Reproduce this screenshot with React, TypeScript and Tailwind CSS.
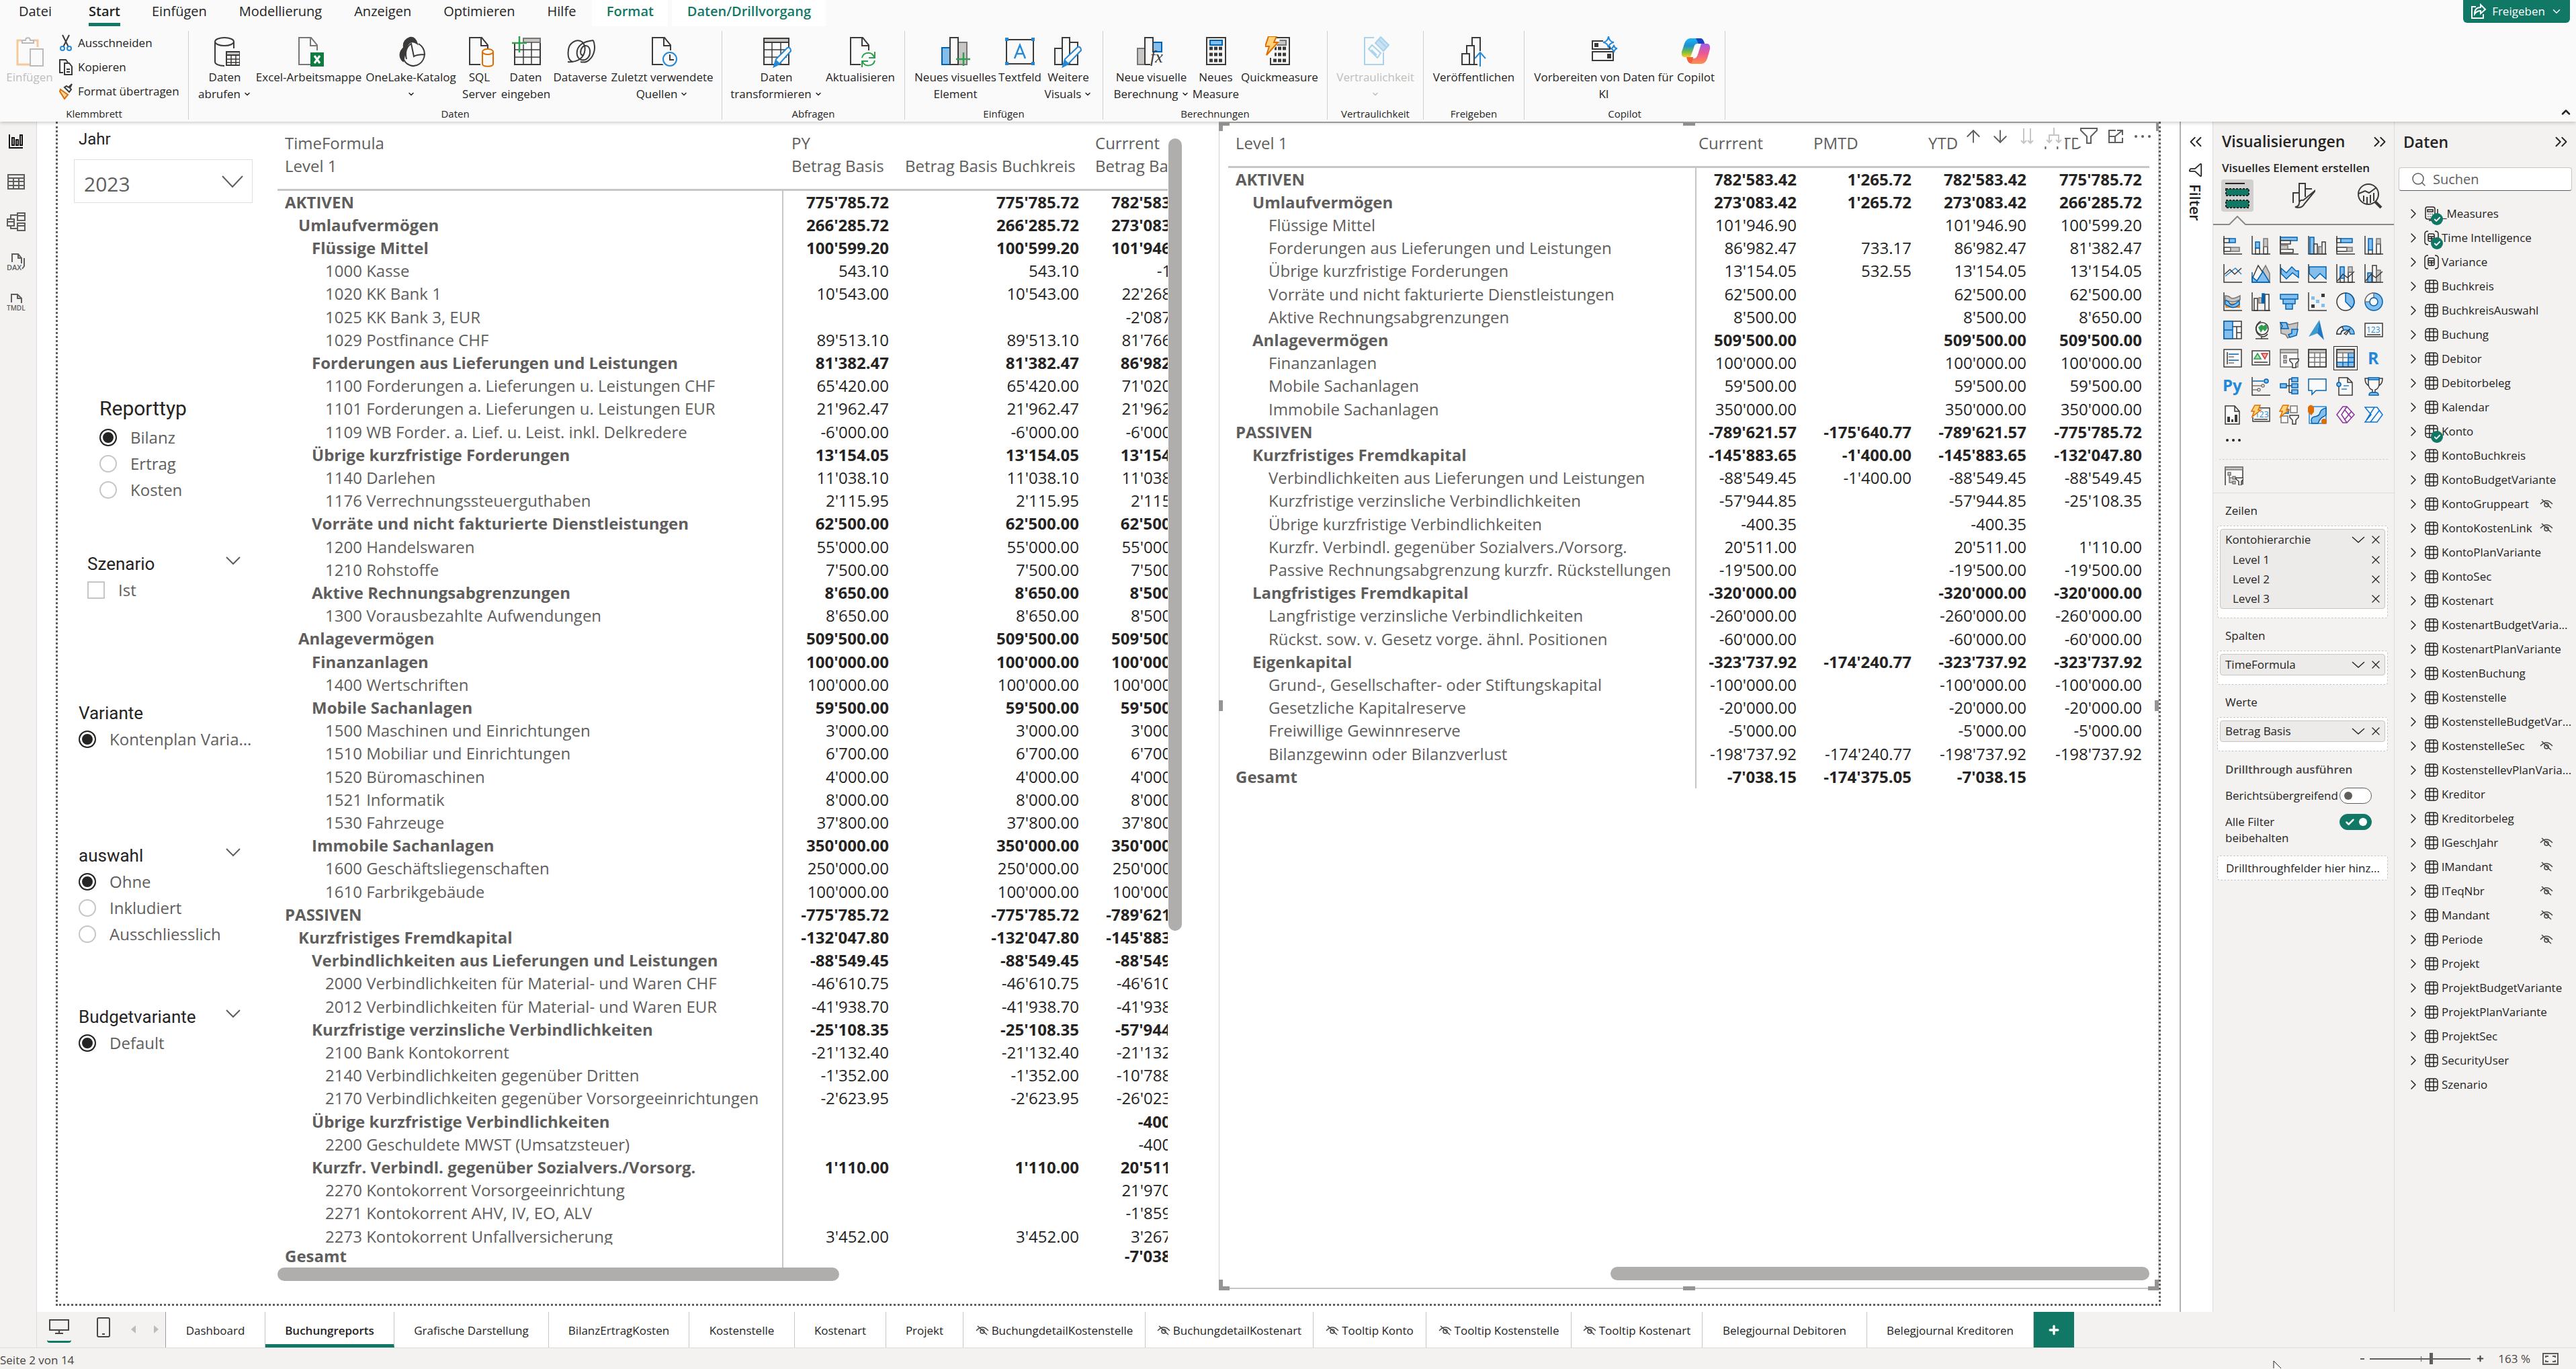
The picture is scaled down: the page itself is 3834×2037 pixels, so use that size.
import type { ReactNode } from "react";
import {
    ArrowDown,
    ArrowUp,
    Check,
    ChevronDown,
    ChevronRight,
    ChevronUp,
    ChevronsLeft,
    ChevronsRight,
    Filter,
    Plus,
    Search,
    X,
} from "lucide-react";

const DARK = "#3b3a39";
const BLUE = "#83beec";
const BLUE_LINE = "#0063b1";
const SKY = "#2488d8";
const GREY = "#c8c6c4";
const GREY_LINE = "#797775";
const PAPER = "#fafafa";
const ORANGE = "#e06c00";
const GREEN = "#2f9e4f";

/* ---------- ribbon icons ---------- */

function RibbonSvg({ children }: { children: ReactNode }) {
    return (
        <svg
            className="h-12 w-11 flex-none"
            viewBox="0 0 44 48"
            fill="none"
            stroke={DARK}
            strokeWidth="2"
        >
            {children}
        </svg>
    );
}

const Sheet = () => <path d="M28 42H7V2h18l9 11v8M24 2v12h10" fill="none" />;

const ribbonIcons: Record<string, ReactNode> = {
    paste: (
        <>
            <path d="M10 6H4v36h18" stroke="#f3c99c" strokeWidth="3" />
            <path d="M28 6h6v10" stroke="#f3c99c" strokeWidth="3" />
            <path d="M11 10V6h5c0-5 7-5 7 0h5v4z" stroke="#bdbbb8" fill={PAPER} />
            <path d="M23 19h19v25H23z" stroke="#bdbbb8" fill={PAPER} />
        </>
    ),
    database: (
        <>
            <ellipse cx="21" cy="8" rx="14" ry="6" />
            <path d="M7 8v30c0 3 5 6 14 6M35 8v10" />
            <path d="M24 23h20v20H24z" fill={PAPER} />
            <path d="M24 23h20v5H24z" fill={GREY} />
            <path d="M24 34h20M24 39h20M31 28v15M38 28v15" strokeWidth="1.5" />
        </>
    ),
    excel: (
        <>
            <g stroke={GREY_LINE}>
                <Sheet />
            </g>
            <path d="M24 24h20v21H24z" fill="#107c41" stroke="none" />
            <path d="m30 29 8 11m0-11-8 11" stroke="#fff" strokeWidth="3" />
        </>
    ),
    onelake: (
        <>
            <path d="M20 2c-8 3-10 9-9 15-6 5-8 14-1 20 3-9 2-19 8-26 4-4 9-3 13 0-2-6-6-10-11-9z" fill={DARK} />
            <path d="M15 34c-3-12 1-19 7-23l4 19c3-2 7-3 16-3-1 12-12 20-22 16-6-2-9-7-10-12M33 11c6 4 9 9 9 16" />
        </>
    ),
    sql: (
        <>
            <Sheet />
            <path d="M23 18h21v27H23z" fill={PAPER} stroke="none" />
            <g stroke={ORANGE}>
                <ellipse cx="34" cy="23" rx="8" ry="4" />
                <path d="M26 23v18c0 5 16 5 16 0V23" />
            </g>
        </>
    ),
    enter: (
        <>
            <path d="M5 10v32h38V3H18" />
            <path d="M18 3h25v6H18z" fill={GREY} stroke={GREY_LINE} />
            <path d="M5 20h38M5 31h38M18 12v30M30 9v33" strokeWidth="1.5" />
            <path d="M12 0v24M1 10h22" stroke={GREEN} strokeWidth="2.5" />
        </>
    ),
    dataverse: (
        <g strokeWidth="2">
            <path d="M41 6c-8 1-13 2-18 6-9 7-8 20 0 23 8 2 14-5 13-14-1-7-7-9-11-5-4 5-4 13 1 12" />
            <path d="M3 38c8 1 13-1 18-4 9-7 10-20 3-26C16 3 5 10 4 20c-1 7-1 16 7 18" />
            <path d="M41 6c4 10 2 22-6 29-4 4-9 4-13 3" />
        </g>
    ),
    recent: (
        <>
            <Sheet />
            <circle cx="33" cy="34" r="13" fill={PAPER} stroke="none" />
            <circle cx="33" cy="34" r="10" fill={PAPER} stroke={SKY} />
            <path d="M33 27v8h6" />
        </>
    ),
    transform: (
        <>
            <path d="M3 3h37v39H3z" />
            <path d="M3 3h37v6H3z" fill={GREY} />
            <path d="M3 20h37M3 31h34M15 9v33M28 9v33" strokeWidth="1.5" />
            <path d="m18 45 3-11 17-17q5-1 5 5L26 41z" fill={PAPER} stroke={SKY} />
            <path d="m18 45 3-9 5 5z" fill={SKY} stroke={SKY} />
        </>
    ),
    refresh: (
        <>
            <Sheet />
            <path d="M22 22h23v24H22z" fill={PAPER} stroke="none" />
            <path d="M24 32c2-9 15-10 18-1m1-8v9h-9M43 36c-2 9-15 10-18 2m-1 8v-9h9" stroke={GREEN} />
        </>
    ),
    newVisual: (
        <>
            <path d="M2 17h12v25H2z" fill={BLUE} stroke={BLUE_LINE} />
            <path d="M26 9h13v33H26z" fill={GREY} stroke={GREY_LINE} />
            <path d="M14 2h12v40H14z" fill={PAPER} />
            <path d="M34 24v20M23 34h22" stroke={GREEN} strokeWidth="2.5" />
        </>
    ),
    textbox: (
        <>
            <path d="M2 5h40v36H2z" />
            <path d="M0 2h5v5H0zM39 2h5v5h-5zM0 38h5v5H0zM39 38h5v5h-5z" fill={SKY} stroke="none" />
            <path d="m14 33 8-20 8 20M17 26h10" stroke={SKY} strokeWidth="2.5" />
        </>
    ),
    moreVisuals: (
        <>
            <path d="M2 18h11v24H2zM13 2h11v40H13zM24 9h12v33H24z" fill={PAPER} />
            <path d="m14 45 3-11 19-18q5-1 5 5L22 41z" fill={PAPER} stroke={SKY} />
            <path d="m14 45 3-9 5 5z" fill={SKY} stroke={SKY} />
        </>
    ),
    calcVisual: (
        <>
            <path d="M1 18h11v24H1z" fill={GREY} stroke={GREY_LINE} />
            <path d="M24 9h13v14H24z" fill={BLUE} stroke={BLUE_LINE} />
            <path d="M12 42V2h12v22M12 42h8" />
            <text x="20" y="39" fill={DARK} stroke="none" fontSize="26" fontStyle="italic" fontFamily="Liberation Serif, serif">
                fx
            </text>
        </>
    ),
    calculator: (
        <>
            <path d="M8 2h28v40H8z" />
            <path d="M13 6h18v7H13z" fill={BLUE} stroke={BLUE_LINE} />
            <path d="M12 18h20M12 27h20M12 36h20" strokeWidth="5" strokeDasharray="5 2" />
        </>
    ),
    quick: (
        <>
            <path d="M8 2h28v40H8z" />
            <path d="M13 6h18v7H13z" fill={GREY} stroke={GREY_LINE} />
            <path d="M12 18h20M12 27h20M12 36h20" strokeWidth="5" strokeDasharray="5 2" />
            <path d="M8-2H0v34h14V18l8-12z" fill={PAPER} stroke="none" />
            <path d="M5 0h12l-4 9h6L2 28l4-13H0z" fill="#ffd37a" stroke={ORANGE} />
        </>
    ),
    sensitivity: (
        <g stroke="#a9d3ec">
            <path d="M20 2H6v40h28V24" />
            <path d="m22 10 8-9 12 12-8 9zM27 5l12 12" fill="#c9e3f3" />
            <path d="m12 19 5-6 13 12-5 7zM16 20l8 8" />
        </g>
    ),
    publish: (
        <>
            <path d="M4 26h11v16H4zM11 26V14h11v28M19 14V2h12v20M4 42h23" />
            <path d="M31 45V24m-8 9 8-9 8 9" stroke={SKY} />
        </>
    ),
    prepare: (
        <>
            <path d="M21 7H5v12h26v-4M5 23h31v13H5z" />
            <path d="M9 11h4v4H9zM28 27h4v5h-4z" fill={DARK} />
            <path d="M29 0q1 8 8 9-7 1-8 8-1-7-8-8 7-1 8-9zM37 13q1 5 5 5-4 1-5 6-1-5-5-6 4 0 5-5z" fill={PAPER} stroke={SKY} />
        </>
    ),
    copilot: (
        <g stroke="none">
            <defs>
                <linearGradient id="cp-left" x1="0" y1="0" x2="0" y2="1">
                    <stop offset="0" stopColor="#19b6f6" />
                    <stop offset=".4" stopColor="#1f8fd0" />
                    <stop offset=".7" stopColor="#6dbb4a" />
                    <stop offset="1" stopColor="#ffcb1f" />
                </linearGradient>
                <linearGradient id="cp-right" x1="0" y1="0" x2="0" y2="1">
                    <stop offset="0" stopColor="#a35ae6" />
                    <stop offset=".5" stopColor="#ee5a8f" />
                    <stop offset="1" stopColor="#ff8f4a" />
                </linearGradient>
            </defs>
            <path d="M14 3h14q5 0 7 8H24q-4 0-5 6l-5 14H5q-5 0-4-8l4-12q3-8 9-8z" fill="url(#cp-left)" />
            <path d="M22 3h7q4 0 6 8H26z" fill="#1643c6" />
            <path d="M30 41H16q-5 0-7-8h10q4 0 6-6l5-16h8q6 0 5 8l-4 14q-3 8-9 8z" fill="url(#cp-right)" />
            <path d="M8 31h10q-1 9-4 9-4 0-6-9z" fill="#f0603a" />
        </g>
    ),
};

type RibbonItem = { icon: string; lines: string[]; width: string; menu?: boolean; off?: boolean };

const ribbonGroups: { name: string; width: string; items: RibbonItem[] }[] = [
    {
        name: "Daten",
        width: "w-[794px]",
        items: [
            { icon: "database", lines: ["Daten", "abrufen"], width: "w-[80px]", menu: true },
            { icon: "excel", lines: ["Excel-Arbeitsmappe"], width: "w-[170px]" },
            { icon: "onelake", lines: ["OneLake-Katalog", ""], width: "w-[134px]", menu: true },
            { icon: "sql", lines: ["SQL", "Server"], width: "w-[70px]" },
            { icon: "enter", lines: ["Daten", "eingeben"], width: "w-[68px]" },
            { icon: "dataverse", lines: ["Dataverse"], width: "w-[94px]" },
            { icon: "recent", lines: ["Zuletzt verwendete", "Quellen"], width: "w-[150px]", menu: true },
        ],
    },
    {
        name: "Abfragen",
        width: "w-[272px]",
        items: [
            { icon: "transform", lines: ["Daten", "transformieren"], width: "w-[140px]", menu: true },
            { icon: "refresh", lines: ["Aktualisieren"], width: "w-[110px]" },
        ],
    },
    {
        name: "Einfügen",
        width: "w-[295px]",
        items: [
            { icon: "newVisual", lines: ["Neues visuelles", "Element"], width: "w-[126px]" },
            { icon: "textbox", lines: ["Textfeld"], width: "w-[66px]" },
            { icon: "moreVisuals", lines: ["Weitere", "Visuals"], width: "w-[78px]", menu: true },
        ],
    },
    {
        name: "Berechnungen",
        width: "w-[334px]",
        items: [
            { icon: "calcVisual", lines: ["Neue visuelle", "Berechnung"], width: "w-[116px]", menu: true },
            { icon: "calculator", lines: ["Neues", "Measure"], width: "w-[76px]" },
            { icon: "quick", lines: ["Quickmeasure"], width: "w-[114px]" },
        ],
    },
    {
        name: "Vertraulichkeit",
        width: "w-[143px]",
        items: [{ icon: "sensitivity", lines: ["Vertraulichkeit", ""], width: "w-[120px]", menu: true, off: true }],
    },
    {
        name: "Freigeben",
        width: "w-[150px]",
        items: [{ icon: "publish", lines: ["Veröffentlichen"], width: "w-[126px]" }],
    },
    {
        name: "Copilot",
        width: "w-[299px]",
        items: [
            { icon: "prepare", lines: ["Vorbereiten von Daten für", "KI"], width: "w-[212px]" },
            { icon: "copilot", lines: ["Copilot"], width: "w-[62px]" },
        ],
    },
];

function RibbonButton({ item }: { item: RibbonItem }) {
    return (
        <button
            disabled={item.off}
            className={`flex flex-none flex-col items-center ${item.width} ${item.off ? "text-[#c0bebc]" : ""}`}
        >
            <RibbonSvg>{ribbonIcons[item.icon]}</RibbonSvg>
            {item.lines.map((line, i) => (
                <span key={i} className="flex h-[25px] items-center gap-1 whitespace-nowrap">
                    {line}
                    {item.menu && i === item.lines.length - 1 && <ChevronDown size={12} strokeWidth={3} />}
                </span>
            ))}
        </button>
    );
}

function Ribbon() {
    const tabs = ["Einfügen", "Modellierung", "Anzeigen", "Optimieren", "Hilfe"];

    return (
        <header className="relative z-10 flex-none bg-[#fafafa] shadow-[0_1px_6px_rgba(0,0,0,0.25)]">
            <div className="flex h-[39px] items-stretch justify-between">
                <nav className="flex pl-1 text-[20px] leading-[34px]">
                    <button className="w-[97px] pb-[5px]">Datei</button>
                    <button className="w-[101px] pl-2 font-semibold">
                        <span className="inline-block h-[39px] border-b-5 border-[#117865]">Start</span>
                    </button>
                    {tabs.map((tab) => (
                        <button key={tab} className="px-[24px] pb-[5px]">
                            {tab}
                        </button>
                    ))}
                    <button className="w-[113px] bg-white pb-[5px] font-semibold text-[#117865]">Format</button>
                    <button className="ml-[6px] w-[229px] bg-white pb-[5px] font-semibold text-[#117865]">
                        Daten/Drillvorgang
                    </button>
                </nav>
                <button className="mr-[9px] flex h-[34px] w-[159px] items-center justify-center gap-2 rounded-b-md bg-[#117865] text-[17px] text-white">
                    <svg width="24" height="24" viewBox="0 0 24 24" fill="none" stroke="currentColor" strokeWidth="2">
                        <path d="M8 5H2v17h17v-6M15 2l7 7-7 6v-4c-5 0-7 2-9 5 0-6 3-10 9-10z" />
                    </svg>
                    Freigeben
                    <ChevronDown size={18} />
                </button>
            </div>

            <div className="flex h-[142px] pt-[7px] text-[17px]">
                <section className="flex h-[132px] w-[281px] flex-none flex-col border-r border-[#d2d0ce]">
                    <div className="flex flex-1">
                        <button disabled className="flex w-[88px] flex-col items-center pt-2 text-[#c0bebc]">
                            <RibbonSvg>{ribbonIcons.paste}</RibbonSvg>
                            <span className="h-[25px]">Einfügen</span>
                        </button>
                        <div className="flex flex-col">
                            <button className="flex h-9 items-center gap-2">
                                <svg width="20" height="26" viewBox="0 0 20 26" fill="none" stroke={DARK} strokeWidth="2">
                                    <path d="m5 1 9 18M15 1 6 19" />
                                    <circle cx="5" cy="21" r="3" stroke={SKY} />
                                    <circle cx="15" cy="21" r="3" stroke={SKY} />
                                </svg>
                                Ausschneiden
                            </button>
                            <button className="flex h-9 items-center gap-2">
                                <svg width="20" height="26" viewBox="0 0 20 26" fill="none" stroke={DARK} strokeWidth="2">
                                    <path d="M6 21H1V2h9l3 4M8 7h7l4 5v12H8zM11 16h5M11 20h5" />
                                </svg>
                                Kopieren
                            </button>
                            <button className="flex h-9 items-center gap-2 whitespace-nowrap">
                                <svg width="20" height="26" viewBox="0 0 20 26" fill="none" strokeWidth="2">
                                    <path d="m2 10 11 8-5 6L1 13z" fill="#fbd9a9" stroke={ORANGE} />
                                    <path d="m8 7 7 7 3-4-2-2 3-6-5 5-3-2z" fill={PAPER} stroke={DARK} />
                                </svg>
                                Format übertragen
                            </button>
                        </div>
                    </div>
                    <h2 className="text-center text-[15px] leading-[18px]">Klemmbrett</h2>
                </section>

                {ribbonGroups.map((group) => (
                    <section
                        key={group.name}
                        className={`flex h-[132px] flex-none flex-col border-r border-[#d2d0ce] ${group.width}`}
                    >
                        <div className="flex flex-1 justify-center pt-2">
                            {group.items.map((item) => (
                                <RibbonButton key={item.lines[0] + item.icon} item={item} />
                            ))}
                        </div>
                        <h2 className="text-center text-[15px] leading-[18px]">{group.name}</h2>
                    </section>
                ))}

                <button aria-label="Menüband minimieren" className="mt-auto mr-[5px] mb-1 ml-auto">
                    <ChevronUp size={20} strokeWidth={3} />
                </button>
            </div>
        </header>
    );
}

/* ---------- left rail ---------- */

function SideRail() {
    const frame = "h-7 w-7";

    return (
        <nav className="flex w-[55px] flex-none flex-col items-center gap-[32px] border-r border-[#dedcda] bg-[#f3f2f1] pt-[15px] pr-[6px]">
            <button aria-label="Berichtsansicht">
                <svg className={frame} viewBox="0 0 28 28" fill="none" stroke="#111" strokeWidth="2">
                    <path d="M4 4v20h20M8 9h3v11H8zM14 12h3v8h-3zM20 5h3v15h-3z" />
                </svg>
            </button>
            <button aria-label="Tabellenansicht">
                <svg className={frame} viewBox="0 0 28 28" fill="none" stroke="#605e5c" strokeWidth="2">
                    <path d="M2 4h24v21H2zM2 9h24M2 14h24M2 20h24M10 9v16M18 9v16" />
                </svg>
            </button>
            <button aria-label="Modellansicht">
                <svg className={frame} viewBox="0 0 28 28" fill="none" stroke="#605e5c" strokeWidth="2">
                    <path d="M16 1h11v11H16zM16 16h11v11H16zM1 10h10v10H1zM16 5h11M16 20h11M1 14h10M6 10V4h10M6 20v4h10" />
                </svg>
            </button>
            <button aria-label="DAX-Abfrageansicht">
                <svg className={frame} viewBox="0 0 28 28" fill="none" stroke="#605e5c" strokeWidth="2">
                    <path d="M8 14V2h9l5 6v8M17 2v6h5M26 8v12l-3 4" />
                    <text x="0" y="26" fontSize="11" fontWeight="600" fill="#605e5c" stroke="none">
                        DAX
                    </text>
                </svg>
            </button>
            <button aria-label="TMDL-Ansicht">
                <svg className={frame} viewBox="0 0 28 28" fill="none" stroke="#605e5c" strokeWidth="2">
                    <path d="M7 14V2h9l6 6v7M16 2v6h6" />
                    <text x="0" y="26" fontSize="10" fontWeight="600" fill="#605e5c" stroke="none">
                        TMDL
                    </text>
                </svg>
            </button>
        </nav>
    );
}

/* ---------- slicers ---------- */

const choiceBox =
    "h-[26px] w-[26px] flex-none appearance-none border-2 border-[#c8c6c4] bg-white checked:border-[#252423] checked:bg-[#252423] checked:shadow-[inset_0_0_0_3px_white]";

type SlicerProps = {
    title: string;
    options: string[];
    spacing: string;
    indent?: string;
    type?: "radio" | "checkbox";
    menu?: boolean;
    selected?: boolean;
    big?: boolean;
};

function Slicer({ title, options, spacing, indent = "pl-[31px]", type = "radio", menu, selected = true, big }: SlicerProps) {
    return (
        <fieldset className={`${spacing} ${indent}`}>
            <legend
                className={`font-['Roboto',sans-serif] text-[#252423] ${
                    big ? "text-[30px] leading-[36px]" : "text-[26px] leading-[28px]"
                }`}
            >
                {title}
            </legend>
            {menu && (
                <button aria-label={`${title} Optionen`} className="absolute left-[248px] -mt-[32px]">
                    <svg width="26" height="26" viewBox="0 0 26 26" fill="none" stroke="currentColor" strokeWidth="2">
                        <path d="m3 8 10 10L23 8" />
                    </svg>
                </button>
            )}
            <div className="mt-[5px] text-[24px] leading-[39px]">
                {options.map((option, i) => (
                    <label key={option} className="flex h-[39px] items-center gap-5 whitespace-nowrap">
                        <input
                            type={type}
                            name={title}
                            defaultChecked={selected && i === 0}
                            className={`${choiceBox} ${type === "radio" ? "rounded-full" : ""}`}
                        />
                        {option}
                    </label>
                ))}
            </div>
        </fieldset>
    );
}

function Slicers() {
    return (
        <div className="relative w-[327px] flex-none pt-[12px] text-[#605e5c]">
            <label
                htmlFor="jahr"
                className="block pl-[31px] font-['Roboto',sans-serif] text-[24px] leading-[28px] text-[#252423]"
            >
                Jahr
            </label>
            <div className="relative mt-4 ml-6 w-[266px]">
                <select
                    id="jahr"
                    className="h-[65px] w-full appearance-none border border-[#e1dfdd] bg-white pt-2 pl-[14px] text-[30px]"
                >
                    <option>2023</option>
                </select>
                <svg className="pointer-events-none absolute top-[24px] right-[14px]" width="32" height="20" viewBox="0 0 32 20" fill="none" stroke="#605e5c" strokeWidth="2">
                    <path d="m1 1 15 16L31 1" />
                </svg>
            </div>
            <Slicer title="Reporttyp" options={["Bilanz", "Ertrag", "Kosten"]} spacing="mt-[288px]" indent="pl-[62px]" big />
            <Slicer title="Szenario" options={["Ist"]} spacing="mt-[77px]" indent="pl-[44px]" type="checkbox" selected={false} menu />
            <Slicer title="Variante" options={["Kontenplan Varia..."]} spacing="mt-[150px]" />
            <Slicer title="auswahl" options={["Ohne", "Inkludiert", "Ausschliesslich"]} spacing="mt-[140px]" menu />
            <Slicer title="Budgetvariante" options={["Default"]} spacing="mt-[90px]" menu />
        </div>
    );
}

/* ---------- matrices ---------- */

// level, label, then one value for each column
type Row = [number, string, ...string[]];

const accountRows: Row[] = [
    [0, "AKTIVEN", "775'785.72", "782'583.42"],
    [1, "Umlaufvermögen", "266'285.72", "273'083.42"],
    [2, "Flüssige Mittel", "100'599.20", "101'946.90"],
    [3, "1000 Kasse", "543.10", "-1.10"],
    [3, "1020 KK Bank 1", "10'543.00", "22'268.10"],
    [3, "1025 KK Bank 3, EUR", "", "-2'087.00"],
    [3, "1029 Postfinance CHF", "89'513.10", "81'766.90"],
    [2, "Forderungen aus Lieferungen und Leistungen", "81'382.47", "86'982.47"],
    [3, "1100 Forderungen a. Lieferungen u. Leistungen CHF", "65'420.00", "71'020.00"],
    [3, "1101 Forderungen a. Lieferungen u. Leistungen EUR", "21'962.47", "21'962.47"],
    [3, "1109 WB Forder. a. Lief. u. Leist. inkl. Delkredere", "-6'000.00", "-6'000.00"],
    [2, "Übrige kurzfristige Forderungen", "13'154.05", "13'154.05"],
    [3, "1140 Darlehen", "11'038.10", "11'038.10"],
    [3, "1176 Verrechnungssteuerguthaben", "2'115.95", "2'115.95"],
    [2, "Vorräte und nicht fakturierte Dienstleistungen", "62'500.00", "62'500.00"],
    [3, "1200 Handelswaren", "55'000.00", "55'000.00"],
    [3, "1210 Rohstoffe", "7'500.00", "7'500.00"],
    [2, "Aktive Rechnungsabgrenzungen", "8'650.00", "8'500.00"],
    [3, "1300 Vorausbezahlte Aufwendungen", "8'650.00", "8'500.00"],
    [1, "Anlagevermögen", "509'500.00", "509'500.00"],
    [2, "Finanzanlagen", "100'000.00", "100'000.00"],
    [3, "1400 Wertschriften", "100'000.00", "100'000.00"],
    [2, "Mobile Sachanlagen", "59'500.00", "59'500.00"],
    [3, "1500 Maschinen und Einrichtungen", "3'000.00", "3'000.00"],
    [3, "1510 Mobiliar und Einrichtungen", "6'700.00", "6'700.00"],
    [3, "1520 Büromaschinen", "4'000.00", "4'000.00"],
    [3, "1521 Informatik", "8'000.00", "8'000.00"],
    [3, "1530 Fahrzeuge", "37'800.00", "37'800.00"],
    [2, "Immobile Sachanlagen", "350'000.00", "350'000.00"],
    [3, "1600 Geschäftsliegenschaften", "250'000.00", "250'000.00"],
    [3, "1610 Farbrikgebäude", "100'000.00", "100'000.00"],
    [0, "PASSIVEN", "-775'785.72", "-789'621.57"],
    [1, "Kurzfristiges Fremdkapital", "-132'047.80", "-145'883.65"],
    [2, "Verbindlichkeiten aus Lieferungen und Leistungen", "-88'549.45", "-88'549.45"],
    [3, "2000 Verbindlichkeiten für Material- und Waren CHF", "-46'610.75", "-46'610.75"],
    [3, "2012 Verbindlichkeiten für Material- und Waren EUR", "-41'938.70", "-41'938.70"],
    [2, "Kurzfristige verzinsliche Verbindlichkeiten", "-25'108.35", "-57'944.85"],
    [3, "2100 Bank Kontokorrent", "-21'132.40", "-21'132.40"],
    [3, "2140 Verbindlichkeiten gegenüber Dritten", "-1'352.00", "-10'788.50"],
    [3, "2170 Verbindlichkeiten gegenüber Vorsorgeeinrichtungen", "-2'623.95", "-26'023.95"],
    [2, "Übrige kurzfristige Verbindlichkeiten", "", "-400.35"],
    [3, "2200 Geschuldete MWST (Umsatzsteuer)", "", "-400.35"],
    [2, "Kurzfr. Verbindl. gegenüber Sozialvers./Vorsorg.", "1'110.00", "20'511.00"],
    [3, "2270 Kontokorrent Vorsorgeeinrichtung", "", "21'970.00"],
    [3, "2271 Kontokorrent AHV, IV, EO, ALV", "", "-1'859.00"],
    [3, "2273 Kontokorrent Unfallversicherung", "3'452.00", "3'267.00"],
];

const levelRows: Row[] = [
    [0, "AKTIVEN", "782'583.42", "1'265.72", "782'583.42", "775'785.72"],
    [1, "Umlaufvermögen", "273'083.42", "1'265.72", "273'083.42", "266'285.72"],
    [2, "Flüssige Mittel", "101'946.90", "", "101'946.90", "100'599.20"],
    [2, "Forderungen aus Lieferungen und Leistungen", "86'982.47", "733.17", "86'982.47", "81'382.47"],
    [2, "Übrige kurzfristige Forderungen", "13'154.05", "532.55", "13'154.05", "13'154.05"],
    [2, "Vorräte und nicht fakturierte Dienstleistungen", "62'500.00", "", "62'500.00", "62'500.00"],
    [2, "Aktive Rechnungsabgrenzungen", "8'500.00", "", "8'500.00", "8'650.00"],
    [1, "Anlagevermögen", "509'500.00", "", "509'500.00", "509'500.00"],
    [2, "Finanzanlagen", "100'000.00", "", "100'000.00", "100'000.00"],
    [2, "Mobile Sachanlagen", "59'500.00", "", "59'500.00", "59'500.00"],
    [2, "Immobile Sachanlagen", "350'000.00", "", "350'000.00", "350'000.00"],
    [0, "PASSIVEN", "-789'621.57", "-175'640.77", "-789'621.57", "-775'785.72"],
    [1, "Kurzfristiges Fremdkapital", "-145'883.65", "-1'400.00", "-145'883.65", "-132'047.80"],
    [2, "Verbindlichkeiten aus Lieferungen und Leistungen", "-88'549.45", "-1'400.00", "-88'549.45", "-88'549.45"],
    [2, "Kurzfristige verzinsliche Verbindlichkeiten", "-57'944.85", "", "-57'944.85", "-25'108.35"],
    [2, "Übrige kurzfristige Verbindlichkeiten", "-400.35", "", "-400.35", ""],
    [2, "Kurzfr. Verbindl. gegenüber Sozialvers./Vorsorg.", "20'511.00", "", "20'511.00", "1'110.00"],
    [2, "Passive Rechnungsabgrenzung kurzfr. Rückstellungen", "-19'500.00", "", "-19'500.00", "-19'500.00"],
    [1, "Langfristiges Fremdkapital", "-320'000.00", "", "-320'000.00", "-320'000.00"],
    [2, "Langfristige verzinsliche Verbindlichkeiten", "-260'000.00", "", "-260'000.00", "-260'000.00"],
    [2, "Rückst. sow. v. Gesetz vorge. ähnl. Positionen", "-60'000.00", "", "-60'000.00", "-60'000.00"],
    [1, "Eigenkapital", "-323'737.92", "-174'240.77", "-323'737.92", "-323'737.92"],
    [2, "Grund-, Gesellschafter- oder Stiftungskapital", "-100'000.00", "", "-100'000.00", "-100'000.00"],
    [2, "Gesetzliche Kapitalreserve", "-20'000.00", "", "-20'000.00", "-20'000.00"],
    [2, "Freiwillige Gewinnreserve", "-5'000.00", "", "-5'000.00", "-5'000.00"],
    [2, "Bilanzgewinn oder Bilanzverlust", "-198'737.92", "-174'240.77", "-198'737.92", "-198'737.92"],
    [0, "Gesamt", "-7'038.15", "-174'375.05", "-7'038.15", ""],
];

const accountIndent = ["pl-[11px]", "pl-[31px]", "pl-[51px]", "pl-[71px]"];
const levelIndent = ["pl-[11px]", "pl-[36px]", "pl-[60px]"];

function MatrixRow({ label, values, bold, indent }: { label: string; values: string[]; bold: boolean; indent: string }) {
    return (
        <tr className={`h-[34px] nth-[5n]:h-[35px] ${bold ? "font-bold" : ""}`}>
            <th
                scope="row"
                className={`border-r-2 border-[#c8c6c4] p-0 text-left text-[#605e5c] ${indent} ${bold ? "font-bold" : "font-normal"}`}
            >
                {label}
            </th>
            {values.map((value, i) => (
                <td key={i} className="p-0 pr-[11px] text-right text-[#252423]">
                    {value}
                </td>
            ))}
        </tr>
    );
}

function AccountColumns() {
    return (
        <colgroup>
            <col className="w-[752px]" />
            <col className="w-[169px]" />
            <col className="w-[283px]" />
            <col className="w-[171px]" />
        </colgroup>
    );
}

function AccountMatrix() {
    const tableClass = "w-[1375px] table-fixed border-collapse text-[24px] leading-[34px] whitespace-nowrap";

    return (
        <div className="flex w-[1351px] flex-none">
            <div className="flex w-[1325px] flex-col overflow-hidden pt-[15px] pb-[34px]">
                <div className="min-h-0 flex-1 overflow-hidden">
                    <table className={tableClass}>
                        <AccountColumns />
                        <thead className="text-left text-[#605e5c]">
                            <tr className="h-[34px]">
                                <th className="p-0 pl-[11px] font-normal">TimeFormula</th>
                                <th className="p-0 pl-[13px] font-normal" colSpan={2}>PY</th>
                                <th className="p-0 pl-[13px] font-normal">Currrent</th>
                            </tr>
                            <tr className="h-[52px] border-b-3 border-[#c8c6c4] align-top">
                                <th className="p-0 pl-[11px] font-normal">Level 1</th>
                                <th className="p-0 pl-[13px] font-normal">Betrag Basis</th>
                                <th className="p-0 pl-[13px] font-normal">Betrag Basis Buchkreis</th>
                                <th className="p-0 pl-[13px] font-normal">Betrag Basis</th>
                            </tr>
                        </thead>
                        <tbody>
                            {accountRows.map(([level, label, previous, current]) => (
                                <MatrixRow
                                    key={label}
                                    label={label}
                                    values={[previous, previous, current]}
                                    bold={level < 3}
                                    indent={accountIndent[level]}
                                />
                            ))}
                        </tbody>
                    </table>
                </div>
                <table className={`${tableClass} flex-none`}>
                    <AccountColumns />
                    <tbody>
                        <MatrixRow label="Gesamt" values={["", "", "-7'038.15"]} bold indent="pl-[11px]" />
                    </tbody>
                </table>
                <div className="h-5 w-[836px] flex-none rounded-full bg-[#b0aeac]" />
            </div>
            <div className="mt-[25px] ml-px h-[1179px] w-5 rounded-full bg-[#b0aeac]" />
        </div>
    );
}

const handle = "absolute bg-[#979593]";

function LevelMatrix() {
    return (
        <div className="relative mb-[22px] ml-[50px] flex min-w-0 flex-1 flex-col border border-t-2 border-b-2 border-[#d2d0ce] border-t-[#b3b0ad] border-b-[#c8c6c4] pt-[13px] pl-[13px]">
            <table className="w-[1371px] table-fixed border-collapse text-[24px] leading-[34px] whitespace-nowrap">
                <colgroup>
                    <col className="w-[696px]" />
                    <col className="w-[161px]" />
                    <col className="w-[171px]" />
                    <col className="w-[171px]" />
                    <col className="w-[172px]" />
                </colgroup>
                <thead className="text-left text-[#605e5c]">
                    <tr className="h-[52px] border-b-3 border-[#c8c6c4] align-top">
                        <th className="p-0 pl-[11px] font-normal">Level 1</th>
                        <th className="p-0 pl-[4px] font-normal">Currrent</th>
                        <th className="p-0 pl-[14px] font-normal">PMTD</th>
                        <th className="p-0 pl-[14px] font-normal">YTD</th>
                        <th className="p-0 pl-[14px] font-normal">PYTD</th>
                    </tr>
                </thead>
                <tbody>
                    {levelRows.map(([level, label, ...values]) => (
                        <MatrixRow
                            key={label}
                            label={label}
                            values={values}
                            bold={level < 2}
                            indent={levelIndent[level]}
                        />
                    ))}
                </tbody>
            </table>
            <div className="mt-auto mr-[13px] mb-[11px] ml-auto h-5 w-[802px] rounded-full bg-[#b0aeac]" />

            {/* visual header, floats over the column headers */}
            <div className="absolute top-[2px] right-[7px] flex gap-[8px] text-[#605e5c]">
                <button aria-label="Drillup" className="flex h-9 w-8 items-center justify-center">
                    <ArrowUp size={30} strokeWidth={1.5} />
                </button>
                <button aria-label="Drilldown" className="flex h-9 w-8 items-center justify-center">
                    <ArrowDown size={30} strokeWidth={1.5} />
                </button>
                <button aria-label="Nächste Ebene" className="flex h-9 w-8 items-center justify-center text-[#c8c6c4]">
                    <svg width="24" height="26" viewBox="0 0 24 26" fill="none" stroke="currentColor" strokeWidth="2">
                        <path d="M7 1v22m-4-4 4 4 4-4M17 1v22m-4-4 4 4 4-4" />
                    </svg>
                </button>
                <button aria-label="Alle erweitern" className="flex h-[33px] w-8 items-center justify-center bg-white text-[#c8c6c4]">
                    <svg width="24" height="26" viewBox="0 0 24 26" fill="none" stroke="currentColor" strokeWidth="2">
                        <path d="M12 1v10M5 23V12h14v11M1 19l4 4 4-4m6 0 4 4 4-4" />
                    </svg>
                </button>
                <button aria-label="Filter" className="ml-3 flex h-[33px] w-8 items-center justify-center bg-white">
                    <svg width="26" height="24" viewBox="0 0 26 24" fill="none" stroke="currentColor" strokeWidth="2">
                        <path d="M1 1h24v3l-9 9v10h-6V13L1 4z" />
                    </svg>
                </button>
                <button aria-label="Fokusmodus" className="flex h-9 w-8 items-center justify-center">
                    <svg width="24" height="22" viewBox="0 0 24 22" fill="none" stroke="currentColor" strokeWidth="2">
                        <path d="M12 2H2v18h20v-7M2 11h9v9M11 11 22 2m-8 0h8v7" />
                    </svg>
                </button>
                <button aria-label="Weitere Optionen" className="flex h-9 w-8 items-center justify-center">
                    <svg width="26" height="6" viewBox="0 0 26 6" fill="currentColor">
                        <circle cx="3" cy="3" r="2" />
                        <circle cx="13" cy="3" r="2" />
                        <circle cx="23" cy="3" r="2" />
                    </svg>
                </button>
            </div>

            <span className={`${handle} top-0 -left-px h-1 w-4`} />
            <span className={`${handle} top-0 -left-px h-3 w-1.5`} />
            <span className={`${handle} top-0 left-1/2 h-1 w-[18px] -translate-x-1/2`} />
            <span className={`${handle} top-0 -right-px h-3 w-1`} />
            <span className={`${handle} top-1/2 -left-px h-4 w-1.5 -translate-y-1/2`} />
            <span className={`${handle} top-1/2 -right-px h-4 w-1.5 -translate-y-1/2`} />
            <span className={`${handle} -bottom-1 left-1/2 h-1.5 w-[18px] -translate-x-1/2`} />
            <span className={`${handle} -bottom-1 -left-px h-1.5 w-4`} />
            <span className={`${handle} -bottom-1 -left-px h-4 w-1.5`} />
            <span className={`${handle} -right-px -bottom-1 h-1.5 w-4`} />
            <span className={`${handle} -right-px -bottom-1 h-4 w-1.5`} />
        </div>
    );
}

/* ---------- visualisation pane ---------- */

const Axis = () => <path d="M1 0v27h27" fill="none" />;
const blue = { fill: BLUE, stroke: BLUE_LINE };
const grey = { fill: GREY, stroke: GREY_LINE };
const Bolt = () => (
    <path d="M5 0h8l-3 7h4L1 17l3-8H0z" fill="#ffd37a" stroke={ORANGE} strokeWidth="1.5" />
);

const visuals: { name: string; art: ReactNode }[] = [
    { name: "Gestapeltes Balkendiagramm", art: <><path d="M1 4h8v6H1zM1 17h10v6H1z" /><path d="M9 4h9v6H9z" {...blue} /><path d="M11 17h13v6H11z" {...grey} /><Axis /></> },
    { name: "Gestapeltes Säulendiagramm", art: <><path d="M6 18h6v9H6zM18 16h6v11h-6z" /><path d="M6 9h6v9H6z" {...blue} /><path d="M18 4h6v12h-6z" {...grey} /><Axis /></> },
    { name: "Gruppiertes Balkendiagramm", art: <><path d="M1 2h25v5H1z" {...blue} /><path d="M1 7h15v5H1zM1 20h19v5H1z" /><path d="M1 14h11v6H1z" {...grey} /><Axis /></> },
    { name: "Gruppiertes Säulendiagramm", art: <><path d="M3 2h6v25H3z" {...blue} /><path d="M9 12h5v15H9zM21 9h5v18h-5z" /><path d="M16 16h5v11h-5z" {...grey} /><Axis /></> },
    { name: "100% gestapelte Balken", art: <><path d="M1 4h6v6H1zM1 17h15v6H1z" /><path d="M7 4h17v6H7z" {...blue} /><path d="M16 17h8v6h-8z" {...grey} /><Axis /></> },
    { name: "100% gestapelte Säulen", art: <><path d="M6 20h6v7H6zM18 12h6v15h-6z" /><path d="M6 4h6v17H6z" {...blue} /><path d="M18 4h6v8h-6z" {...grey} /><Axis /></> },
    { name: "Liniendiagramm", art: <><path d="M3 18 18 6l9 9" fill="none" stroke={SKY} /><path d="m2 15 8-7 7 7L27 6" fill="none" /><Axis /></> },
    { name: "Flächendiagramm", art: <><path d="m14 14 7-12 6 12v13z" {...grey} /><path d="M2 20 10 2l8 12-10 11z" /><path d="m1 19 7 6 9-14 10 16H1z" {...blue} /><path d="M1 12v15h26" fill="none" stroke={BLUE_LINE} /></> },
    { name: "Gestapelte Flächen", art: <><path d="m2 6 8 7 8-9 6 6h4v10l-9-7-9 9-8-8z" {...blue} /><Axis /></> },
    { name: "100% Flächen", art: <><path d="M2 4h25v18l-9-8-8 8-8-8z" {...blue} /><Axis /></> },
    { name: "Linien und gestapelte Säulen", art: <><path d="M6 20h6v7H6zM18 12h6v15h-6z" /><path d="M6 4h6v17H6z" {...blue} /><path d="M18 4h6v8h-6z" {...grey} /><path d="m2 25 8-10 7 5L27 11" fill="none" /><Axis /></> },
    { name: "Linien und gruppierte Säulen", art: <><path d="M5 13h6v14H5z" {...blue} /><path d="M12 2h6v25h-6z" /><path d="M18 9h6v18h-6z" {...grey} /><path d="m2 25 8-10 7 5L27 11" fill="none" /><Axis /></> },
    { name: "Menübanddiagramm", art: <><path d="M4 17h20v5H4z" fill="#f9b35a" stroke={ORANGE} /><path d="M3 5q5 0 8 3t14-3v6q-8 4-13 3t-9-2z" {...grey} /><path d="M3 12q4 0 7 5t14-5v6q-7 6-12 4t-9-4z" {...blue} /><Axis /></> },
    { name: "Wasserfalldiagramm", art: <><path d="M4 9h5v18H4zM20 3h6v24h-6z" /><path d="M11 8h4v8h-4z" {...grey} /><path d="M16 2h3v14h-3z" fill={BLUE_LINE} stroke={BLUE_LINE} /><Axis /></> },
    { name: "Trichter", art: <path d="M1 3h26v7H1zM5 10h18v7H5zM9 17h10v8H9z" {...blue} /> },
    { name: "Punktdiagramm", art: <><path d="M5 6h5v5H5zM12 11h5v5h-5zM20 17h5v5h-5z" fill={BLUE} stroke="none" /><path d="M20 2h5v5h-5zM5 18h5v5H5z" fill={DARK} stroke="none" /><Axis /></> },
    { name: "Kreisdiagramm", art: <><circle cx="14" cy="14" r="13" /><path d="M14 14V1a13 13 0 0 1 9 22z" {...blue} /></> },
    { name: "Ringdiagramm", art: <><circle cx="14" cy="14" r="13" {...blue} /><path d="M14 1A13 13 0 0 0 1 14h7a6 6 0 0 1 6-6z" fill={PAPER} stroke={GREY_LINE} /><circle cx="14" cy="14" r="6" stroke={BLUE_LINE} /></> },
    { name: "Treemap", art: <><path d="M1 1h26v26H1zM14 9h13M20 9v18M20 18h7" /><path d="M1 1h13v26H1zM1 14h13" {...blue} /></> },
    { name: "Karte", art: <><circle cx="16" cy="12" r="9" /><path d="m10 10 5-4 3 2 4-3 2 6-4 5-3-3-3 5z" fill={GREEN} stroke="none" /><path d="M14 1a12 12 0 0 0 3 23q4 0 7-4M15 24v3M6 27h19" fill="none" /></> },
    { name: "Flächenkartogramm", art: <><path d="m1 3 9 1 4 2 13-3-1 12-8 7-6 4-3-5-7-2z" {...grey} /><path d="M1 3h9l3 9H2l2-4zM18 13h9l-2 9-10 3-2-4 5-2z" {...blue} /></> },
    { name: "Azure Maps", art: <><path d="M17-1 1 24l13-5z" fill="#3a9bcf" stroke="none" /><path d="m17-1 7 30-10-10z" fill="#1f78c4" stroke="none" /></> },
    { name: "Tachometer", art: <><path d="M1 20a13 12 0 0 1 26 0h-6q-1-6-7-6t-7 6z" {...blue} /><path d="M1 20Q1 12 9 9l2 5q-4 1-4 6zM12 19l9-7-6 9z" /></> },
    { name: "Karte (Zahl)", art: <><path d="M1 4h26v20H1zM4 21h20" /><text x="3" y="18" fontSize="12" fill={SKY} stroke="none">123</text></> },
    { name: "Mehrzeilige Karte", art: <><path d="M1 1h26v26H1zM6 5v18" /><path d="M8 8h15M8 17h15" stroke={BLUE_LINE} /><path d="M8 12h8M8 21h8" stroke={GREY_LINE} /></> },
    { name: "KPI", art: <><path d="M1 3h26v21H1zM4 20h20" /><path d="m4 15 5-8 5 8z" fill="#a9dfb4" stroke={GREEN} /><path d="m15 7 9 0-4 8z" fill="#f6b1b1" stroke="#d13438" /></> },
    { name: "Datenschnitt", art: <><path d="M1 1h26v26H1z" stroke={GREY_LINE} /><path d="M1 1h26v5H1z" {...grey} /><path d="M6 10h4v4H6zM6 17h4v4H6z" {...grey} /><path d="M15 15h13v3l-4 4v6h-5v-6l-4-4z" /></> },
    { name: "Tabelle", art: <><path d="M1 1h26v26H1z" /><path d="M1 1h26v5H1z" {...grey} /><path d="M1 13h26M1 20h26M10 6v21M18 6v21" fill="none" stroke={GREY_LINE} strokeWidth="1.5" /><path d="M1 1h26v26H1z" fill="none" /></> },
    { name: "Matrix", art: <><path d="M1 1h26v26H1z" /><path d="M18 6h9v21H1v-7h17z" {...blue} /><path d="M1 1h26v5H1z" {...grey} /><path d="M1 13h17M10 6v14" fill="none" stroke={GREY_LINE} strokeWidth="1.5" /><path d="M18 13h9M18 20h9M10 20v7M18 20v7" fill="none" stroke={BLUE_LINE} strokeWidth="1.5" /><path d="M1 1h26v26H1z" fill="none" /></> },
    { name: "R-Visual", art: <text x="5" y="23" fontSize="25" fontWeight="700" fill={SKY} stroke="none">R</text> },
    { name: "Python-Visual", art: <text x="-1" y="21" fontSize="24" fontWeight="700" fill={SKY} stroke="none">Py</text> },
    { name: "Wichtige Einflussfaktoren", art: <><path d="M2 6h16" stroke={BLUE_LINE} /><circle cx="22" cy="6" r="3" {...blue} /><path d="M2 13h13M2 19h7" stroke={GREY_LINE} /><circle cx="17" cy="13" r="2" stroke={GREY_LINE} /><circle cx="11" cy="19" r="2" stroke={GREY_LINE} /><Axis /></> },
    { name: "Analysebaum", art: <><path d="M10 13h8M14 3v20M14 3h5M14 23h5" fill="none" /><path d="M1 10h9v6H1zM18 1h9v6h-9zM18 10h9v6h-9zM18 19h9v6h-9z" {...blue} /></> },
    { name: "Q&A", art: <path d="M1 3h26v17H12l-6 6v-6H1z" stroke={BLUE_LINE} /> },
    { name: "Narrativ", art: <><path d="M4 1h13l7 7v19H4zM17 1v7h7" /><circle cx="4" cy="11" r="3" {...blue} /><path d="M11 13h8M8 18h8" stroke={SKY} /></> },
    { name: "Metriken", art: <><path d="M6 2H1q0 10 7 11M22 2h5q0 10-7 11" fill="none" /><path d="M6 2h16v9q-1 7-6 8v4h-4v-4q-5-1-6-8z" /><path d="M6 1h16v3H6zM7 27q0-4 4-4h6q4 0 4 4z" {...blue} /></> },
    { name: "Paginierter Bericht", art: <><path d="M3 1h14l7 8v19H3zM17 1v8h7" /><path d="M6 17h4v8H6zM12 21h3v4h-3zM17 14h4v11h-4z" fill={DARK} stroke="none" /></> },
    { name: "Karte (neu)", art: <><path d="M12 4h15v20H2v-6M4 21h20" /><text x="5" y="18" fontSize="12" fill={SKY} stroke="none">123</text><Bolt /></> },
    { name: "Datenschnitt (neu)", art: <><path d="M16 1h10v10H16zM2 16h10v10H2z" stroke={GREY_LINE} /><path d="M15 15h13v3l-4 4v6h-5v-6l-4-4z" /><path d="M7 6h6v6H7z" {...blue} /><Bolt /></> },
    { name: "ArcGIS", art: <><path d="M2 2h25v25H2z" fill="#e5eef7" stroke={SKY} /><path d="M27 4q-8 2-9 7t-8 6-4 10h9q3-8 8-10t4-6z" {...blue} /><path d="M0 3q4-7 9 0v7l-4 5-5-5z" fill={ORANGE} stroke="none" /><circle cx="24" cy="24" r="4" fill={ORANGE} stroke="none" /></> },
    { name: "Power Apps", art: <path d="m10 2-9 12 9 12h6l11-12L16 2zM16 2 8 14l8 12M13 7l10 12M23 9 13 21" stroke="#8b2fa0" /> },
    { name: "Power Automate", art: <path d="M1 3h18l8 11-8 11H1l9-11zM15 3 3 22M22 8 9 25" stroke="#0a74d6" /> },
];

function FieldRow({ label, child }: { label: string; child?: boolean }) {
    return (
        <div className={`flex items-center pr-[3px] ${child ? "h-[29px] pl-[18px]" : "h-[30px] pl-[7px]"}`}>
            <span className="flex-1">{label}</span>
            {!child && (
                <button aria-label={`${label} Optionen`} className="mr-[6px]">
                    <svg width="20" height="12" viewBox="0 0 20 12" fill="none" stroke="currentColor" strokeWidth="1.5">
                        <path d="m1 2 9 8 9-8" />
                    </svg>
                </button>
            )}
            <button aria-label={`${label} entfernen`}>
                <X size={20} strokeWidth={1.5} />
            </button>
        </div>
    );
}

function FieldWell({ title, field, levels = [] }: { title: string; field: string; levels?: string[] }) {
    return (
        <section>
            <h3 className="flex h-12 items-center pt-[4px] pl-[18px]">{title}</h3>
            <div className="mr-[9px] ml-[6px] rounded-sm border border-dashed border-[#c8c6c4] bg-white px-[3px] pt-1 pb-[13px]">
                <div className="rounded-sm border border-[#c8c6c4] bg-[#edebe9]">
                    <FieldRow label={field} />
                    {levels.map((level) => (
                        <FieldRow key={level} label={level} child />
                    ))}
                </div>
            </div>
        </section>
    );
}

function Toggle({ id, defaultChecked }: { id: string; defaultChecked?: boolean }) {
    return (
        <span className="relative flex h-6 w-12 flex-none">
            <input
                id={id}
                type="checkbox"
                role="switch"
                defaultChecked={defaultChecked}
                className="peer h-6 w-12 appearance-none rounded-full border border-[#605e5c] bg-white checked:border-[#117865] checked:bg-[#117865]"
            />
            <span className="pointer-events-none absolute top-[6px] left-[7px] h-3 w-3 rounded-full bg-[#605e5c] peer-checked:left-[29px] peer-checked:bg-white" />
            <Check
                size={15}
                strokeWidth={4}
                className="pointer-events-none absolute top-[5px] left-[8px] hidden text-white peer-checked:block"
            />
        </span>
    );
}

function VisualPane() {
    return (
        <aside className="w-[271px] flex-none border-x border-[#dedcda] bg-[#f3f2f1] text-[17px] text-[#252423]">
            <div className="flex h-[59px] items-center justify-between pr-[6px] pl-[13px]">
                <h2 className="text-[23px] font-semibold">Visualisierungen</h2>
                <button aria-label="Bereich einklappen">
                    <ChevronsRight size={30} strokeWidth={1.5} />
                </button>
            </div>
            <h3 className="h-5 pl-[13px] leading-5 font-semibold whitespace-nowrap">Visuelles Element erstellen</h3>
            <div className="mt-[7px] flex h-12 justify-between px-[12px]">
                <button aria-label="Visual erstellen" className="flex w-12 items-center justify-center rounded-sm bg-[#d2d0ce]">
                    <svg width="36" height="38" viewBox="0 0 36 38" fill="#117865" stroke="#252423" strokeWidth="2">
                        <path d="M0 1h29" />
                        <path d="M1 9h34v10H1zM1 26h34v11H1z" strokeDasharray="3 2" />
                    </svg>
                </button>
                <button aria-label="Visual formatieren" className="flex w-12 items-center justify-center">
                    <svg width="34" height="38" viewBox="0 0 34 38" fill="none" stroke={DARK} strokeWidth="2">
                        <path d="M1 30V15h9M10 28V1h9v20M19 9h10" />
                        <path d="m33 12-17 14q-5-1-6 4 0 5-6 6 10 3 14-5l15-18z" fill="#f3f2f1" />
                    </svg>
                </button>
                <button aria-label="Analyse" className="flex w-12 items-center justify-center">
                    <svg width="38" height="40" viewBox="0 0 38 40" fill="none" stroke={DARK} strokeWidth="2">
                        <circle cx="17" cy="18" r="15" />
                        <path d="m3 17 9-4 6 3 11-8M10 20v9M15 22v10M20 19v12M25 16v12" />
                        <path d="m27 29 9 9" strokeWidth="4" />
                    </svg>
                </button>
            </div>
            <svg className="mt-[6px] block" width="269" height="14" viewBox="0 0 269 14" fill="none" stroke="#8a8886" strokeWidth="2">
                <path d="M0 13h24L36 1l12 12h221" />
            </svg>
            <div className="mt-[9px] ml-[8px] grid w-[252px] grid-cols-6">
                {visuals.map((visual) => (
                    <button key={visual.name} aria-label={visual.name} className="flex h-[42px] items-center justify-center">
                        <span
                            className={`flex h-9 w-9 items-center justify-center ${
                                visual.name === "Matrix" ? "border border-[#252423]" : ""
                            }`}
                        >
                            <svg className="overflow-visible" width="28" height="28" viewBox="0 0 28 28" fill={PAPER} stroke={DARK} strokeWidth="1.5">
                                {visual.art}
                            </svg>
                        </span>
                    </button>
                ))}
            </div>
            <button aria-label="Weitere Visuals abrufen" className="flex h-[34px] items-center pl-[18px]">
                <svg width="24" height="4" viewBox="0 0 24 4" fill="#252423">
                    <circle cx="3" cy="2" r="2" />
                    <circle cx="12" cy="2" r="2" />
                    <circle cx="21" cy="2" r="2" />
                </svg>
            </button>
            <div className="mx-[9px] mt-[11px] border-b border-dashed border-[#d2d0ce]" />
            <svg className="mt-[10px] ml-[17px] block" width="28" height="28" viewBox="0 0 28 28" fill={PAPER} stroke={DARK} strokeWidth="1.5">
                <path d="M1 28V1h26v26" />
                <path d="M1 1h26v4H1z" {...grey} />
                <path d="M5 9h4v4H5zM12 15h4v4h-4zM12 22h4v4h-4zM7 13v11h5M7 17h5" {...grey} />
                <path d="M17 17h11v2l-3 3v6h-4v-6l-4-3z" />
            </svg>
            <div className="mt-[11px] border-b border-[#dedcda]" />

            <FieldWell title="Zeilen" field="Kontohierarchie" levels={["Level 1", "Level 2", "Level 3"]} />
            <FieldWell title="Spalten" field="TimeFormula" />
            <FieldWell title="Werte" field="Betrag Basis" />

            <h3 className="flex h-12 items-center pt-[6px] pl-[18px] font-semibold text-[#484644]">Drillthrough ausführen</h3>
            <div className="flex h-9 items-center justify-between pr-[33px] pl-[18px]">
                <label htmlFor="cross-report">Berichtsübergreifend</label>
                <Toggle id="cross-report" />
            </div>
            <div className="mt-[9px] flex items-start justify-between pr-[33px] pl-[18px] leading-6">
                <label htmlFor="keep-filters" className="w-[130px]">
                    Alle Filter beibehalten
                </label>
                <Toggle id="keep-filters" defaultChecked />
            </div>
            <div className="mt-[14px] mr-[9px] ml-[6px] h-[37px] overflow-hidden rounded-sm border border-dashed border-[#c8c6c4] bg-white pl-[12px] leading-[35px] whitespace-nowrap">
                Drillthroughfelder hier hinz...
            </div>
        </aside>
    );
}

/* ---------- data pane ---------- */

function HiddenEye() {
    return (
        <svg className="flex-none text-[#484644]" width="20" height="20" viewBox="0 0 20 20" fill="none" stroke="currentColor" strokeWidth="1.5">
            <path d="M1 10q9-10 18 0M3 3l14 13" />
            <circle cx="10" cy="11" r="3" />
        </svg>
    );
}

function TableIcon({ kind }: { kind: string }) {
    return (
        <svg className="flex-none" width="22" height="22" viewBox="0 0 22 22" fill="none" stroke="#252423" strokeWidth="1.5">
            {kind === "table" && (
                <>
                    <rect x="2" y="2" width="18" height="18" rx="4" />
                    <path d="M2 7h18M2 14h18M8 2v18M14 2v18" />
                </>
            )}
            {kind === "measures" && (
                <>
                    <rect x="2" y="1" width="14" height="18" rx="3" />
                    <path d="M5 5h8v3H5zM6 11v1M9 11v1M12 11v1M6 15v1M9 15v1M20 4v12q0 5-6 5H7" />
                </>
            )}
            {kind === "calc" && (
                <>
                    <path d="M6 1q-5 0-5 4v12q0 4 5 4M16 1q5 0 5 4v12q0 4-5 4" />
                    <rect x="6" y="5" width="9" height="11" rx="2" />
                    <path d="M6 9h9M6 12h9M11 9v7" />
                </>
            )}
        </svg>
    );
}

// name, icon, flag: c = used in the visual, h = hidden
const tables: [string, string, string?][] = [
    ["_Measures", "measures", "c"],
    ["Time Intelligence", "calc", "c"],
    ["Variance", "calc"],
    ["Buchkreis", "table"],
    ["BuchkreisAuswahl", "table"],
    ["Buchung", "table"],
    ["Debitor", "table"],
    ["Debitorbeleg", "table"],
    ["Kalendar", "table"],
    ["Konto", "table", "c"],
    ["KontoBuchkreis", "table"],
    ["KontoBudgetVariante", "table"],
    ["KontoGruppeart", "table", "h"],
    ["KontoKostenLink", "table", "h"],
    ["KontoPlanVariante", "table"],
    ["KontoSec", "table"],
    ["Kostenart", "table"],
    ["KostenartBudgetVaria...", "table"],
    ["KostenartPlanVariante", "table"],
    ["KostenBuchung", "table"],
    ["Kostenstelle", "table"],
    ["KostenstelleBudgetVar...", "table"],
    ["KostenstelleSec", "table", "h"],
    ["KostenstellevPlanVaria...", "table"],
    ["Kreditor", "table"],
    ["Kreditorbeleg", "table"],
    ["lGeschJahr", "table", "h"],
    ["lMandant", "table", "h"],
    ["lTeqNbr", "table", "h"],
    ["Mandant", "table", "h"],
    ["Periode", "table", "h"],
    ["Projekt", "table"],
    ["ProjektBudgetVariante", "table"],
    ["ProjektPlanVariante", "table"],
    ["ProjektSec", "table"],
    ["SecurityUser", "table"],
    ["Szenario", "table"],
];

function DataPane() {
    return (
        <aside className="w-[270px] flex-none bg-[#f3f2f1] text-[17px] text-[#252423]">
            <div className="flex h-[60px] items-center justify-between pr-[7px] pl-[13px]">
                <h2 className="text-[23px] font-semibold">Daten</h2>
                <button aria-label="Bereich einklappen">
                    <ChevronsRight size={30} strokeWidth={1.5} />
                </button>
            </div>
            <div className="mx-[6px] mt-2 flex h-[35px] items-center gap-[9px] rounded border border-[#c8c6c4] border-b-[#605e5c] bg-white pl-[17px]">
                <Search size={24} strokeWidth={1.5} className="flex-none text-[#605e5c]" />
                <input
                    type="search"
                    aria-label="Suchen"
                    placeholder="Suchen"
                    className="w-full min-w-0 text-[20px] outline-none placeholder:text-[#605e5c]"
                />
            </div>
            <ul className="mt-4">
                {tables.map(([name, kind, flag]) => (
                    <li key={name} className="relative flex h-9 items-center pl-[16px]">
                        <button aria-label={`${name} erweitern`} className="mr-[4px]">
                            <ChevronRight size={24} strokeWidth={1.5} />
                        </button>
                        <TableIcon kind={kind} />
                        <span className="ml-[4px] whitespace-nowrap">{name}</span>
                        {flag === "c" && (
                            <span className="absolute top-[17px] left-[54px] flex h-[18px] w-[18px] items-center justify-center rounded-full bg-[#117865] text-white">
                                <Check size={11} strokeWidth={4} />
                            </span>
                        )}
                        {flag === "h" && (
                            <span className="mr-[34px] ml-auto">
                                <HiddenEye />
                            </span>
                        )}
                    </li>
                ))}
            </ul>
        </aside>
    );
}

/* ---------- page tabs and status bar ---------- */

const pages = [
    { name: "Dashboard", width: "w-[148px]" },
    { name: "Buchungreports", width: "w-[192px]" },
    { name: "Grafische Darstellung", width: "w-[230px]" },
    { name: "BilanzErtragKosten", width: "w-[209px]" },
    { name: "Kostenstelle", width: "w-[157px]" },
    { name: "Kostenart", width: "w-[136px]" },
    { name: "Projekt", width: "w-[115px]" },
    { name: "BuchungdetailKostenstelle", width: "w-[271px]", hidden: true },
    { name: "BuchungdetailKostenart", width: "w-[250px]", hidden: true },
    { name: "Tooltip Konto", width: "w-[168px]", hidden: true },
    { name: "Tooltip Kostenstelle", width: "w-[216px]", hidden: true },
    { name: "Tooltip Kostenart", width: "w-[195px]", hidden: true },
    { name: "Belegjournal Debitoren", width: "w-[245px]" },
    { name: "Belegjournal Kreditoren", width: "w-[248px]" },
];

function PageTabs() {
    return (
        <nav className="flex h-[53px] flex-none bg-[#f3f2f1] text-[17px] text-[#252423]">
            <div className="flex w-[192px] flex-none items-start border-r border-[#a19f9d] pl-[15px]">
                <button aria-label="Desktoplayout" className="flex h-[46px] w-9 items-center justify-center rounded-b-sm border-b-3 border-[#117865]">
                    <svg width="30" height="22" viewBox="0 0 30 22" fill="none" stroke="#484644" strokeWidth="2">
                        <path d="M1 1h28v15H1zM15 16v4M9 21h12" />
                    </svg>
                </button>
                <button aria-label="Mobiles Layout" className="ml-[38px] flex h-[46px] items-center">
                    <svg width="20" height="32" viewBox="0 0 20 32" fill="none" stroke="#484644" strokeWidth="2">
                        <rect x="1" y="2" width="18" height="28" rx="2" />
                        <path d="M8 26h4" />
                    </svg>
                </button>
                <button aria-label="Vorherige Seite" className="ml-[30px] flex h-[52px] items-center">
                    <svg width="10" height="12" viewBox="0 0 10 12" fill="#bebbb8">
                        <path d="M8 0v12L1 6z" />
                    </svg>
                </button>
                <button aria-label="Nächste Seite" className="ml-[23px] flex h-[52px] items-center">
                    <svg width="10" height="12" viewBox="0 0 10 12" fill="#bebbb8">
                        <path d="M2 0v12l7-6z" />
                    </svg>
                </button>
            </div>
            {pages.map((page) => (
                <button
                    key={page.name}
                    className={`flex flex-none items-center justify-center gap-1 border-r border-[#c8c6c4] bg-white whitespace-nowrap ${page.width} ${
                        page.name === "Buchungreports" ? "border-b-5 border-b-[#117865] pt-[7px] font-semibold" : "pt-[2px]"
                    }`}
                >
                    {page.hidden && <HiddenEye />}
                    {page.name}
                </button>
            ))}
            <button aria-label="Neue Seite" className="flex w-[60px] items-center justify-center bg-[#117865] text-white">
                <Plus size={20} strokeWidth={4} />
            </button>
        </nav>
    );
}

function StatusBar() {
    return (
        <footer className="flex h-8 flex-none items-center justify-between border-t border-[#dedcda] bg-[#f3f2f1] text-[17px] text-[#484644]">
            <span className="pt-1">Seite 2 von 14</span>
            <div className="flex items-center pr-[26px]">
                <svg className="mt-4 mr-[114px]" width="16" height="12" viewBox="0 0 16 12" fill="#fff" stroke="#252423">
                    <path d="M1 12V1l11 11" />
                </svg>
                <button aria-label="Verkleinern" className="mr-2 h-[2px] w-[6px] bg-[#605e5c]" />
                <div className="relative flex items-center">
                    <span className="absolute left-[76px] h-[8px] w-px bg-[#605e5c]" />
                    <input
                        type="range"
                        aria-label="Zoom"
                        min={0}
                        max={100}
                        defaultValue={61}
                        className="h-[2px] w-[150px] appearance-none bg-[#605e5c] [&::-webkit-slider-thumb]:h-[17px] [&::-webkit-slider-thumb]:w-[5px] [&::-webkit-slider-thumb]:appearance-none [&::-webkit-slider-thumb]:bg-[#605e5c]"
                    />
                </div>
                <button aria-label="Vergrößern" className="ml-2">
                    <Plus size={13} strokeWidth={4} />
                </button>
                <span className="ml-[20px]">163 %</span>
                <button aria-label="An Seite anpassen" className="ml-[18px]">
                    <svg width="24" height="18" viewBox="0 0 24 18" fill="none" stroke="#605e5c" strokeWidth="2">
                        <path d="M1 1h22v16H1zM5 7V5h4M15 5h4v2M19 11v2h-4M9 13H5v-2" />
                    </svg>
                </button>
            </div>
        </footer>
    );
}

export default function App() {
    return (
        <div className="flex h-screen flex-col overflow-hidden bg-[#f3f2f1] font-['Open_Sans','Noto_Sans',sans-serif] text-[#252423]">
            <Ribbon />
            <div className="flex min-h-0 flex-1">
                <SideRail />
                <div className="flex min-w-0 flex-1 flex-col">
                    <div className="flex min-h-0 flex-1">
                        <main className="flex min-w-0 flex-1 bg-white px-[28px] pb-[9px]">
                            <div className="flex min-w-0 flex-1 overflow-hidden border-x-3 border-b-3 border-dotted border-[#605e5c]">
                                <Slicers />
                                <AccountMatrix />
                                <LevelMatrix />
                            </div>
                        </main>
                        <aside className="flex w-[49px] flex-none flex-col items-center border-l-2 border-[#b3b0ad] bg-white pt-[15px] pr-[3px]">
                            <button aria-label="Filterbereich erweitern">
                                <ChevronsLeft size={30} strokeWidth={1.5} />
                            </button>
                            <Filter size={22} strokeWidth={2} className="mt-4 rotate-90" />
                            <h2 className="mt-[10px] text-[22px] leading-[30px] font-semibold [writing-mode:vertical-rl]">Filter</h2>
                        </aside>
                        <VisualPane />
                        <DataPane />
                    </div>
                    <PageTabs />
                </div>
            </div>
            <StatusBar />
        </div>
    );
}
